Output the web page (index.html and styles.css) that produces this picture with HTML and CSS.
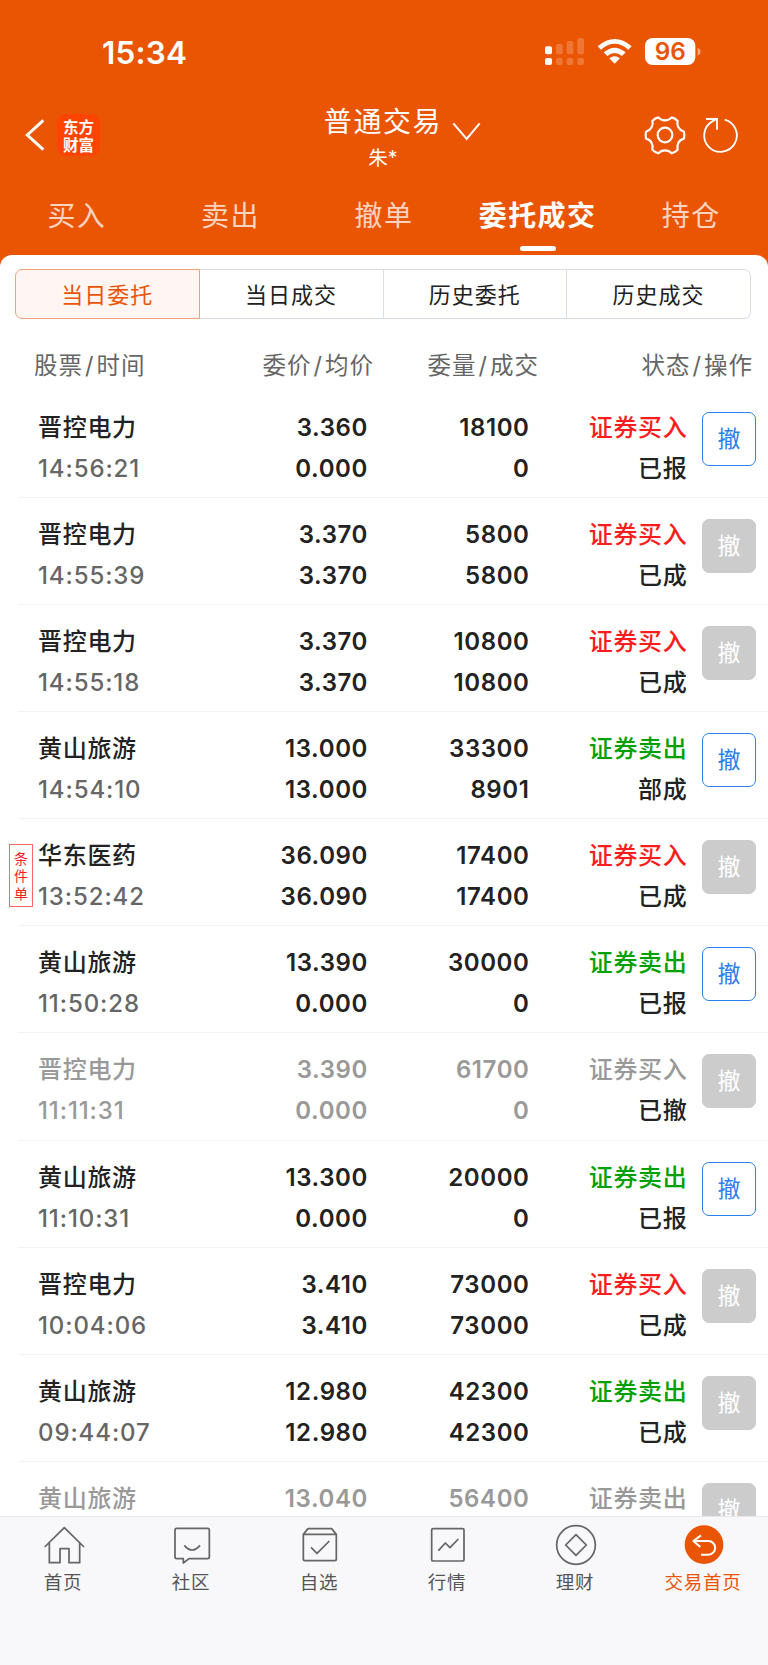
FILE: index.html
```html
<!DOCTYPE html>
<html lang="zh-CN">
<head>
<meta charset="utf-8">
<title>普通交易</title>
<link rel="stylesheet" href="styles.css">
</head>
<body>
<div class="app">
  <header class="top">
    <div class="status">
      <span class="clock">15:34</span>
      <svg class="status-icons" viewBox="474 102 486 102">
        <g fill="#fff">
          <rect x="483" y="139" width="21" height="24" rx="6"/>
          <rect x="483" y="174" width="21" height="21" rx="6"/>
          <g opacity=".2">
            <rect x="516" y="132" width="20" height="31" rx="6"/>
            <rect x="516" y="174" width="20" height="21" rx="6"/>
            <rect x="548" y="123" width="20" height="40" rx="6"/>
            <rect x="548" y="174" width="20" height="21" rx="6"/>
            <rect x="580" y="114" width="20" height="49" rx="6"/>
            <rect x="580" y="174" width="20" height="21" rx="6"/>
          </g>
          <path d="M641 139Q692 95 743 139L733 149Q692 114 651 149Z"/>
          <path d="M659 157Q692 129 725 157L714 168Q692 150 670 168Z"/>
          <path d="M676 175Q692 162 708 175L692 191Z"/>
          <rect x="783" y="114" width="151" height="81" rx="23"/>
          <path d="M941 143Q950 147 950 155T941 167Z" opacity=".5"/>
        </g>
        <text class="battery-text" x="859" y="181" text-anchor="middle">96</text>
      </svg>
    </div>
    <div class="nav">
      <div class="nav-left">
        <svg class="back" viewBox="75 355 60 102"><path d="M130 362L82 406L130 450" fill="none" stroke="#fff" stroke-width="9"/></svg>
        <div class="logo"><span>东方</span><span>财富</span></div>
      </div>
      <div class="nav-mid">
        <div class="nav-title">普通交易
          <svg class="caret" viewBox="204 363 87 60"><path d="M208 370L248 417L287 370" fill="none" stroke="#fff" stroke-width="6"/></svg>
        </div>
        <div class="nav-sub">朱*</div>
      </div>
      <svg class="nav-icons" viewBox="780 345 288 120">
        <g fill="none" stroke="#fff" stroke-width="6.5" stroke-linejoin="round">
          <path d="M823 352C828 358 835 361 843 361S858 358 863 352Q873 354 881 363C877 375 884 390 900 395Q902 405 900 416C884 420 877 435 881 449Q873 457 863 460C858 454 850 451 843 451S828 454 823 460Q813 457 805 449C809 435 802 420 786 416Q784 405 786 395C802 390 809 375 805 363Q813 354 823 352Z"/>
          <circle cx="843" cy="405" r="22"/>
        </g>
        <path d="M1022 359A49 49 0 1 1 985 364L998 357M966 357H999V389" fill="none" stroke="#fff" stroke-width="5.5"/>
      </svg>
    </div>
    <nav class="tabs">
      <span class="tab">买入</span>
      <span class="tab">卖出</span>
      <span class="tab">撤单</span>
      <span class="tab active">委托成交</span>
      <span class="tab">持仓</span>
    </nav>
  </header>
  <main class="sheet">
    <div class="segments">
      <span class="segment on">当日委托</span><span class="segment">当日成交</span><span class="segment">历史委托</span><span class="segment">历史成交</span>
    </div>
    <div class="columns">
      <span>股票<i>/</i>时间</span><span>委价<i>/</i>均价</span><span>委量<i>/</i>成交</span><span>状态<i>/</i>操作</span>
    </div>
    <div class="list">
      <div class="row">
        <div class="cell name"><b>晋控电力</b><em>14:56:21</em></div>
        <div class="cell num"><span>3.360</span><span>0.000</span></div>
        <div class="cell num"><span>18100</span><span>0</span></div>
        <div class="cell state"><b class="buy">证券买入</b><b>已报</b></div>
        <span class="cancel">撤</span>
      </div>
      <div class="row">
        <div class="cell name"><b>晋控电力</b><em>14:55:39</em></div>
        <div class="cell num"><span>3.370</span><span>3.370</span></div>
        <div class="cell num"><span>5800</span><span>5800</span></div>
        <div class="cell state"><b class="buy">证券买入</b><b>已成</b></div>
        <span class="cancel off">撤</span>
      </div>
      <div class="row">
        <div class="cell name"><b>晋控电力</b><em>14:55:18</em></div>
        <div class="cell num"><span>3.370</span><span>3.370</span></div>
        <div class="cell num"><span>10800</span><span>10800</span></div>
        <div class="cell state"><b class="buy">证券买入</b><b>已成</b></div>
        <span class="cancel off">撤</span>
      </div>
      <div class="row">
        <div class="cell name"><b>黄山旅游</b><em>14:54:10</em></div>
        <div class="cell num"><span>13.000</span><span>13.000</span></div>
        <div class="cell num"><span>33300</span><span>8901</span></div>
        <div class="cell state"><b class="sell">证券卖出</b><b>部成</b></div>
        <span class="cancel">撤</span>
      </div>
      <div class="row">
        <span class="tag">条件单</span>
        <div class="cell name"><b>华东医药</b><em>13:52:42</em></div>
        <div class="cell num"><span>36.090</span><span>36.090</span></div>
        <div class="cell num"><span>17400</span><span>17400</span></div>
        <div class="cell state"><b class="buy">证券买入</b><b>已成</b></div>
        <span class="cancel off">撤</span>
      </div>
      <div class="row">
        <div class="cell name"><b>黄山旅游</b><em>11:50:28</em></div>
        <div class="cell num"><span>13.390</span><span>0.000</span></div>
        <div class="cell num"><span>30000</span><span>0</span></div>
        <div class="cell state"><b class="sell">证券卖出</b><b>已报</b></div>
        <span class="cancel">撤</span>
      </div>
      <div class="row void">
        <div class="cell name"><b>晋控电力</b><em>11:11:31</em></div>
        <div class="cell num"><span>3.390</span><span>0.000</span></div>
        <div class="cell num"><span>61700</span><span>0</span></div>
        <div class="cell state"><b class="buy">证券买入</b><b>已撤</b></div>
        <span class="cancel off">撤</span>
      </div>
      <div class="row">
        <div class="cell name"><b>黄山旅游</b><em>11:10:31</em></div>
        <div class="cell num"><span>13.300</span><span>0.000</span></div>
        <div class="cell num"><span>20000</span><span>0</span></div>
        <div class="cell state"><b class="sell">证券卖出</b><b>已报</b></div>
        <span class="cancel">撤</span>
      </div>
      <div class="row">
        <div class="cell name"><b>晋控电力</b><em>10:04:06</em></div>
        <div class="cell num"><span>3.410</span><span>3.410</span></div>
        <div class="cell num"><span>73000</span><span>73000</span></div>
        <div class="cell state"><b class="buy">证券买入</b><b>已成</b></div>
        <span class="cancel off">撤</span>
      </div>
      <div class="row">
        <div class="cell name"><b>黄山旅游</b><em>09:44:07</em></div>
        <div class="cell num"><span>12.980</span><span>12.980</span></div>
        <div class="cell num"><span>42300</span><span>42300</span></div>
        <div class="cell state"><b class="sell">证券卖出</b><b>已成</b></div>
        <span class="cancel off">撤</span>
      </div>
      <div class="row void">
        <div class="cell name"><b>黄山旅游</b></div>
        <div class="cell num"><span>13.040</span></div>
        <div class="cell num"><span>56400</span></div>
        <div class="cell state"><b class="sell">证券卖出</b></div>
        <span class="cancel off">撤</span>
      </div>
    </div>
  </main>
  <footer class="bar">
    <div class="item">
      <svg viewBox="120 120 144 144"><path d="M134 201L193 143L252 201M148 189V248H180V206H207V248H239V189"/></svg>
      <span>首页</span>
    </div>
    <div class="item">
      <svg viewBox="504 120 144 144"><path d="M530 145H623Q628 145 628 150V231Q628 236 623 236H567L550 249V236H530Q525 236 525 231V150Q525 145 530 145ZM553 196Q576 224 600 196"/></svg>
      <span>社区</span>
    </div>
    <div class="item">
      <svg viewBox="888 120 144 144"><path d="M910 163V237Q910 242 915 242H1004Q1009 242 1009 237V163L995 146H924ZM910 163H1009M933 202L951 220L988 183"/></svg>
      <span>自选</span>
    </div>
    <div class="item">
      <svg viewBox="120 120 144 144"><rect x="143" y="146" width="97" height="97" rx="4"/><path d="M163 212L184 189L198 203L223 177"/></svg>
      <span>行情</span>
    </div>
    <div class="item">
      <svg viewBox="504 120 144 144"><circle cx="576" cy="195" r="58"/><path d="M576 164L607 195L576 226L545 195Z"/></svg>
      <span>理财</span>
    </div>
    <div class="item current">
      <svg viewBox="888 120 144 144"><circle class="disc" cx="960" cy="194" r="58"/><path class="arrow" d="M951 166L928 183L949 201M928 183H973A20 20 0 0 1 973 224H951"/></svg>
      <span>交易首页</span>
    </div>
  </footer>
</div>
</body>
</html>
```
FILE: styles.css
```css
* { box-sizing: border-box; }
body {
  margin: 0;
  background: #ea5504;
  font-family: Inter, "Noto Sans CJK SC", sans-serif;
  color: #222;
}
b, em, i { font-style: normal; font-weight: inherit; }
svg { display: block; flex: none; }
.app {
  width: 768px;
  height: 1665px;
  display: flex;
  flex-direction: column;
  overflow: hidden;
}
.top { height: 255px; color: #fff; flex: none; }
.status {
  height: 104px;
  padding: 34px 64px 0 102px;
  display: flex;
  justify-content: space-between;
}
.clock { font-size: 31.5px; font-weight: 600; line-height: 38px; letter-spacing: .2px; }
.status-icons { width: 162px; height: 34px; }
.battery-text { font: 600 73px Inter, sans-serif; fill: #ea5504; }
.nav {
  height: 79px;
  padding: 0 28px 0 25px;
  display: grid;
  grid-template-columns: 1fr auto 1fr;
}
.nav-left { display: flex; gap: 12px; padding-top: 10px; }
.back { width: 20px; height: 34px; margin-top: 4px; }
.logo {
  width: 43px;
  height: 42px;
  border-radius: 9px;
  background: #ff4300;
  display: flex;
  flex-direction: column;
  align-items: center;
  justify-content: center;
  gap: 1px;
  font: 700 15.5px/17px "Noto Sans CJK SC", sans-serif;
}
.nav-mid { display: flex; flex-direction: column; align-items: center; padding: 1px 0 0 1px; }
.nav-title {
  position: relative;
  font-size: 28px;
  line-height: 34px;
  letter-spacing: 1.6px;
}
.caret { position: absolute; left: 128px; top: 16px; width: 29px; height: 20px; }
.nav-sub { font-size: 19.5px; line-height: 28px; margin-top: 5px; }
.nav-icons { width: 96px; height: 40px; justify-self: end; margin-top: 11px; }
.tabs { display: grid; grid-template-columns: repeat(5, 1fr); height: 72px; }
.tab {
  display: flex;
  flex-direction: column;
  align-items: center;
  padding-top: 12px;
  font-size: 28px;
  line-height: 42px;
  letter-spacing: 1.4px;
  color: rgba(255, 255, 255, .76);
}
.tab.active { color: #fff; font-weight: 700; }
.tab.active::after {
  content: "";
  width: 36px;
  height: 5px;
  margin-top: 9px;
  border-radius: 3px;
  background: #fff;
}
.sheet {
  height: 1261px;
  flex: none;
  background: #fff;
  border-radius: 12px 12px 0 0;
  overflow: hidden;
  display: flex;
  flex-direction: column;
}
.segments { display: flex; flex: none; height: 50px; margin: 14px 17px 0 15px; }
.segment {
  flex: 1;
  display: flex;
  align-items: center;
  justify-content: center;
  padding-bottom: 2px;
  font-size: 22px;
  letter-spacing: 1px;
  border: 1px solid #d9dee4;
  border-left-width: 0;
}
.segment.on {
  background: #fff5f2;
  border: 1px solid #f0a27c;
  border-radius: 7px 0 0 7px;
  color: #ea5504;
}
.segment:last-child { border-radius: 0 7px 7px 0; }
.columns {
  flex: none;
  height: 71.5px;
  padding: 29px 15px 0 34px;
  display: grid;
  grid-template-columns: 206px 133px 165px 1fr;
  font-size: 23.5px;
  line-height: 36px;
  letter-spacing: 1px;
  color: #666;
  text-align: right;
  margin-right: 0;
}
.columns span { white-space: nowrap; }
.columns span:first-child { text-align: left; }
.columns span:nth-child(2), .columns span:nth-child(3) { padding-left: 0; margin-right: -1px; }
.columns i { padding: 0 2px; }
.list { flex: 1; overflow: hidden; }
.row {
  position: relative;
  height: 107.17px;
  margin-left: 18px;
  padding: 16px 0 0 20px;
  border-bottom: 1px solid #f3f3f3;
  display: grid;
  grid-template-columns: 180px 150px 161.5px 158px 54px;
  font-size: 24px;
  line-height: 41px;
}
.cell { display: flex; flex-direction: column; text-align: right; font-weight: 500; }
.cell.name { text-align: left; }
.name b, .state b { letter-spacing: .7px; }
.name em { color: #666; letter-spacing: .9px; font-weight: 550; }
.num span { font-weight: 600; letter-spacing: .6px; }
.buy { color: #f91d1d; }
.sell { color: #00a000; }
.void .name, .void .name em, .void .num, .void .buy, .void .sell { color: #999; }
.cancel {
  width: 54px;
  height: 54px;
  margin: 5px 0 0 14.5px;
  border: 1.5px solid #2b80ee;
  border-radius: 7px;
  color: #2b80ee;
  font-size: 23px;
  line-height: 53px;
  text-align: center;
}
.cancel.off { background: #ccc; border-color: #ccc; color: #fff; }
.tag {
  position: absolute;
  left: -9px;
  top: 25px;
  width: 24px;
  height: 63px;
  padding: 5px 4px;
  border: 1px solid #f66;
  color: #f91d1d;
  font-size: 14px;
  line-height: 17.3px;
  text-align: center;
}
.bar {
  flex: 1;
  background: #f8f8fb;
  border-top: 1px solid #e6e6ea;
  display: grid;
  grid-template-columns: repeat(6, 1fr);
}
.item {
  display: flex;
  flex-direction: column;
  align-items: center;
  padding-top: 3px;
  font-size: 18.5px;
  line-height: 28px;
  letter-spacing: .8px;
  color: #555;
}
.item span { margin-right: 2px; }
.item svg { width: 48px; height: 48px; fill: none; stroke: #666; stroke-width: 5.2; stroke-linejoin: round; }
.item.current { color: #ea5504; }
.item .disc { fill: #ea5504; stroke: none; }
.item .arrow { stroke: #fff; stroke-width: 6; }
```
